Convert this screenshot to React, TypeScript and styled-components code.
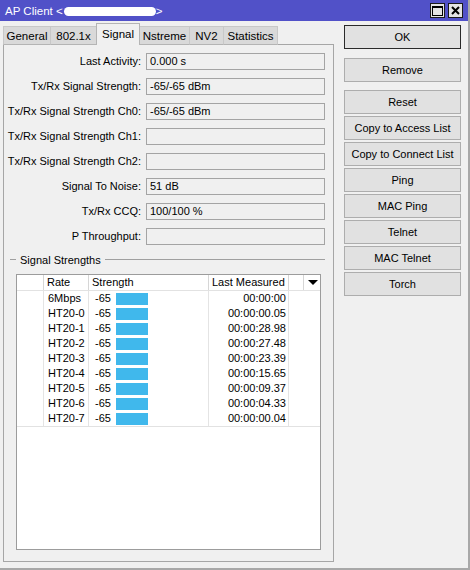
import React from "react";
import styled, { createGlobalStyle } from "styled-components";

const Global = createGlobalStyle`
  html, body { margin: 0; padding: 0; background: #f0f0f0; }
  body { font-family: "Liberation Sans", Arial, sans-serif; font-size: 11px; color: #000; }
  * { box-sizing: border-box; }
`;

const Window = styled.div`
  width: 470px;
  height: 570px;
  background: #f0f0f0;
  border-right: 2px solid #a8a8a8;
  border-bottom: 2px solid #a8a8a8;
  display: flex;
  flex-direction: column;
  overflow: hidden;
`;

const TitleBar = styled.div`
  height: 21px;
  background: #5151c8;
  color: #fff;
  display: flex;
  align-items: center;
  padding: 0 5px 0 5px;
  font-size: 11.5px;
`;

const TitleText = styled.span`
  display: flex;
  align-items: center;
  white-space: pre;
`;

const Redact = styled.span`
  display: inline-block;
  width: 92px;
  height: 9px;
  margin: 1px 0 0 1px;
  background: #fff;
  border-radius: 5px;
`;

const TitleButtons = styled.div`
  margin-left: auto;
  display: flex;
  gap: 3px;
`;

const TitleBtn = styled.div`
  width: 15px;
  height: 15px;
  background: #e4e4e4;
  border: 1px solid #1a1a1a;
  display: flex;
  align-items: center;
  justify-content: center;
`;

const Body = styled.div`
  flex: 1;
  display: flex;
  padding: 2px 0 0 3px;
`;

const LeftCol = styled.div`
  width: 331px;
  display: flex;
  flex-direction: column;
`;

const TabRow = styled.div`
  height: 22px;
  display: flex;
  align-items: flex-end;
`;

const Tab = styled.div<{ $active?: boolean; $w: number }>`
  width: ${(p) => p.$w}px;
  height: ${(p) => (p.$active ? 22 : 19)}px;
  display: flex;
  align-items: center;
  justify-content: center;
  padding-bottom: ${(p) => (p.$active ? 2 : 0)}px;
  font-size: 11.5px;
  white-space: nowrap;
  background: ${(p) => (p.$active ? "#f0f0f0" : "#d9d9d9")};
  border: 1px solid ${(p) => (p.$active ? "#b4b4b4" : "#c8c8c8")};
  border-bottom: ${(p) => (p.$active ? "none" : "1px solid #b4b4b4")};
  margin-left: -1px;
  position: relative;
  z-index: ${(p) => (p.$active ? 1 : 0)};
  &:first-child { margin-left: 0; }
`;

const Panel = styled.div`
  height: 518px;
  margin-top: -1px;
  border: 1px solid #a6a6a6;
  display: flex;
  flex-direction: column;
`;

const FieldGrid = styled.div`
  display: grid;
  grid-template-columns: 137px 179px;
  column-gap: 5px;
  row-gap: 8px;
  margin-top: 8px;
`;

const Label = styled.div`
  text-align: right;
  height: 17px;
  line-height: 17px;
  white-space: nowrap;
`;

const Field = styled.div`
  height: 17px;
  line-height: 15px;
  border: 1px solid #a4a4a4;
  background: #f0f0f0;
  padding-left: 3px;
  white-space: nowrap;
`;

const Legend = styled.div`
  margin: 8px 0 0 6px;
  width: 315px;
  height: 13px;
  display: flex;
  align-items: center;
  gap: 4px;
  &::before {
    content: "";
    width: 6px;
    border-top: 1px solid #a0a0a0;
  }
  &::after {
    content: "";
    flex: 1;
    border-top: 1px solid #a0a0a0;
  }
`;

const Table = styled.div`
  margin: 8px 0 0 12px;
  width: 305px;
  height: 276px;
  background: #fff;
  border: 1px solid #9c9c9c;
`;

const COLS = "27px 45px 120px 80px 15px 1fr";

const HeadRow = styled.div`
  display: grid;
  grid-template-columns: ${COLS};
  height: 16px;
  border-bottom: 1px solid #e2e2e2;
`;

const HeadCell = styled.div<{ $last?: boolean }>`
  border-right: ${(p) => (p.$last ? "none" : "1px solid #d6d6d6")};
  padding-left: 3px;
  line-height: 15px;
  white-space: nowrap;
  display: flex;
  align-items: center;
  justify-content: ${(p) => (p.$last ? "center" : "flex-start")};
`;

const Arrow = styled.span`
  width: 0;
  height: 0;
  border-left: 5px solid transparent;
  border-right: 5px solid transparent;
  border-top: 5px solid #000;
  margin-left: -2px;
`;

const Rows = styled.div`
  border-bottom: 1px solid #e2e2e2;
`;

const Row = styled.div`
  display: grid;
  grid-template-columns: ${COLS};
  height: 15px;
`;

const Cell = styled.div<{ $right?: boolean; $noline?: boolean }>`
  border-right: ${(p) => (p.$noline ? "none" : "1px solid #e4e4e4")};
  line-height: 15px;
  white-space: nowrap;
  padding: ${(p) => (p.$right ? "0 2px 0 0" : "0 0 0 4px")};
  display: flex;
  align-items: center;
  justify-content: ${(p) => (p.$right ? "flex-end" : "flex-start")};
`;

const StrengthCell = styled(Cell)`
  padding-left: 6px;
  gap: 5px;
`;

const Bar = styled.span`
  width: 32px;
  height: 12px;
  background: #40b8ec;
`;

const RightCol = styled.div`
  margin-left: 10px;
  width: 117px;
  display: flex;
  flex-direction: column;
  padding-top: 2px;
  gap: 2px;
`;

const Button = styled.div<{ $primary?: boolean; $space?: number }>`
  height: 24px;
  display: flex;
  align-items: center;
  justify-content: center;
  font-size: 11px;
  background: #e1e1e1;
  border: 1px solid ${(p) => (p.$primary ? "#2a2a2a" : "#adadad")};
  margin-bottom: ${(p) => p.$space ?? 0}px;
  white-space: nowrap;
`;

const fields: [string, string][] = [
  ["Last Activity:", "0.000 s"],
  ["Tx/Rx Signal Strength:", "-65/-65 dBm"],
  ["Tx/Rx Signal Strength Ch0:", "-65/-65 dBm"],
  ["Tx/Rx Signal Strength Ch1:", ""],
  ["Tx/Rx Signal Strength Ch2:", ""],
  ["Signal To Noise:", "51 dB"],
  ["Tx/Rx CCQ:", "100/100 %"],
  ["P Throughput:", ""],
];

const rows: [string, string][] = [
  ["6Mbps", "00:00:00"],
  ["HT20-0", "00:00:00.05"],
  ["HT20-1", "00:00:28.98"],
  ["HT20-2", "00:00:27.48"],
  ["HT20-3", "00:00:23.39"],
  ["HT20-4", "00:00:15.65"],
  ["HT20-5", "00:00:09.37"],
  ["HT20-6", "00:00:04.33"],
  ["HT20-7", "00:00:00.04"],
];

const tabs: [string, number][] = [
  ["General", 48],
  ["802.1x", 47],
  ["Signal", 44],
  ["Nstreme", 51],
  ["NV2", 35],
  ["Statistics", 55],
];

const buttons: [string, boolean, number][] = [
  ["OK", true, 7],
  ["Remove", false, 6],
  ["Reset", false, 0],
  ["Copy to Access List", false, 0],
  ["Copy to Connect List", false, 0],
  ["Ping", false, 0],
  ["MAC Ping", false, 0],
  ["Telnet", false, 0],
  ["MAC Telnet", false, 0],
  ["Torch", false, 0],
];

export default function App() {
  return (
    <>
      <Global />
      <Window>
        <TitleBar>
          <TitleText>
            AP Client {"<"}
            <Redact />
            {">"}
          </TitleText>
          <TitleButtons>
            <TitleBtn>
              <svg width="11" height="10" viewBox="0 0 11 10">
                <rect x="0.5" y="0.5" width="10" height="9" fill="none" stroke="#000" />
                <rect x="0" y="0" width="11" height="2" fill="#000" />
              </svg>
            </TitleBtn>
            <TitleBtn>
              <svg width="9" height="9" viewBox="0 0 9 9">
                <path d="M1 1 L8 8 M8 1 L1 8" stroke="#000" strokeWidth="2" />
              </svg>
            </TitleBtn>
          </TitleButtons>
        </TitleBar>
        <Body>
          <LeftCol>
            <TabRow>
              {tabs.map(([t, w]) => (
                <Tab key={t} $w={w} $active={t === "Signal"}>
                  {t}
                </Tab>
              ))}
            </TabRow>
            <Panel>
              <FieldGrid>
                {fields.map(([l, v]) => (
                  <React.Fragment key={l}>
                    <Label>{l}</Label>
                    <Field>{v}</Field>
                  </React.Fragment>
                ))}
              </FieldGrid>
              <Legend>Signal Strengths</Legend>
              <Table>
                <HeadRow>
                  <HeadCell />
                  <HeadCell>Rate</HeadCell>
                  <HeadCell>Strength</HeadCell>
                  <HeadCell>Last Measured</HeadCell>
                  <HeadCell />
                  <HeadCell $last>
                    <Arrow />
                  </HeadCell>
                </HeadRow>
                <Rows>
                  {rows.map(([r, t]) => (
                    <Row key={r}>
                      <Cell />
                      <Cell>{r}</Cell>
                      <StrengthCell>
                        -65
                        <Bar />
                      </StrengthCell>
                      <Cell $right>{t}</Cell>
                      <Cell $noline />
                      <Cell $noline />
                    </Row>
                  ))}
                </Rows>
              </Table>
            </Panel>
          </LeftCol>
          <RightCol>
            {buttons.map(([b, p, s]) => (
              <Button key={b} $primary={p} $space={s}>
                {b}
              </Button>
            ))}
          </RightCol>
        </Body>
      </Window>
    </>
  );
}
